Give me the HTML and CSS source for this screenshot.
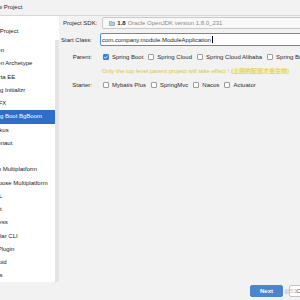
FILE: index.html
```html
<!DOCTYPE html>
<html lang="en">
<head>
    <meta charset="UTF-8">
    <title>New Project</title>
    <link rel="stylesheet" href="styles.css">
</head>
<body>
    <div class="window">
        <!-- Title bar -->
        <div class="titlebar"><span class="title">New Project</span></div>

        <div class="main">
            <!-- Generators list -->
            <div class="sidebar">
                <ul class="generators">
                    <li class="first">New Project</li>
                    <li>Maven</li>
                    <li>Maven Archetype</li>
                    <li>Jakarta EE</li>
                    <li>Spring Initializr</li>
                    <li>JavaFX</li>
                    <li class="selected">Spring Boot BgBoom</li>
                    <li>Quarkus</li>
                    <li>Micronaut</li>
                    <li>Ktor</li>
                    <li>Kotlin Multiplatform</li>
                    <li>Compose Multiplatform</li>
                    <li>HTML</li>
                    <li>React</li>
                    <li>Express</li>
                    <li>Angular CLI</li>
                    <li>IDE Plugin</li>
                    <li>Android</li>
                    <li>Vue.js</li>
                </ul>
                <div class="scroll-thumb"></div>
            </div>

            <!-- Settings -->
            <div class="content">
                <div class="sdk-row">
                    <span class="sdk-label">Project SDK:</span>
                    <div class="sdk-select">
                        <svg class="sdk-icon" width="6" height="6" viewBox="0 0 6 6">
                            <path d="M0.5 1.5h2l0.6 0.7h2.4v3.3h-5z" fill="#b9c9dc" stroke="#6f8fb5" stroke-width="0.6"/>
                        </svg>
                        <b>1.8</b>
                        <span class="muted">Oracle OpenJDK version 1.8.0_231</span>
                    </div>
                </div>

                <div class="form-row start">
                    <span class="label">Start Class:</span>
                    <div class="text-field">com.company.module.ModuleApplication<span class="caret"></span></div>
                </div>

                <div class="form-row parent">
                    <span class="label">Parent:</span>
                    <div class="checks">
                        <span class="check"><span class="box on">
                            <svg width="6" height="6" viewBox="0 0 6 6"><path d="M1.2 3.1l1.2 1.2 2.4-2.7" fill="none" stroke="#fff" stroke-width="0.9"/></svg>
                        </span>Spring Boot</span>
                        <span class="check"><span class="box"></span>Spring Cloud</span>
                        <span class="check"><span class="box"></span>Spring Cloud Alibaba</span>
                        <span class="check"><span class="box"></span>Spring Boot Admin</span>
                    </div>
                </div>

                <div class="form-row">
                    <span class="label"></span>
                    <div class="hint">Only the top level parent project will take effect ! <span class="zh">(上层的配置才会生效)</span></div>
                </div>

                <div class="form-row">
                    <span class="label">Starter:</span>
                    <div class="checks">
                        <span class="check"><span class="box"></span>Mybatis Plus</span>
                        <span class="check"><span class="box"></span>SpringMvc</span>
                        <span class="check"><span class="box"></span>Nacos</span>
                        <span class="check"><span class="box"></span>Actuator</span>
                    </div>
                </div>
            </div>
        </div>

        <!-- Buttons -->
        <div class="footer">
            <button class="btn primary">Next</button>
            <button class="btn cancel">Cancel</button>
            <span class="watermark">@51CTO博客</span>
        </div>
    </div>
</body>
</html>
```

FILE: styles.css
```css
body {
    margin: 0;
    font-family: "Liberation Sans", "Noto Sans CJK SC", sans-serif;
    font-size: 6px;
    line-height: 12px;
    color: #2b2b2b;
    background: #f2f2f2;
}

.window {
    width: 300px;
    height: 300px;
    overflow: hidden;
    display: flex;
    flex-direction: column;
}

.titlebar {
    flex: none;
    height: 15px;
    line-height: 15px;
    border-bottom: 1px solid #d6d6d6;
    overflow: hidden;
}

.title {
    display: block;
    margin-left: -10px;
    white-space: nowrap;
}

.main {
    flex: 1;
    display: flex;
    min-height: 0;
}

/* Generators list */
.sidebar {
    flex: none;
    width: 59px;
    background: #fff;
    position: relative;
    overflow: hidden;
}

.generators {
    list-style: none;
    margin: 0 0 0 -14px;
    padding: 9px 0 0;
}

.generators li {
    height: 13.25px;
    line-height: 13.25px;
    white-space: nowrap;
    color: #222;
}

.generators .first {
    margin-bottom: 5.75px;
}

.generators .selected {
    background: #2e6dc8;
    color: #fff;
}

.scroll-thumb {
    position: absolute;
    right: 0;
    top: 24px;
    bottom: 0;
    width: 4px;
    background: #e4e4e4;
}

/* Settings */
.content {
    flex: 1;
    min-width: 0;
    overflow: hidden;
}

.sdk-row {
    display: flex;
    align-items: center;
    gap: 5px;
    height: 12px;
    margin-top: 1px;
    padding-left: 4px;
}

.sdk-label {
    white-space: nowrap;
}

.sdk-select {
    flex: 1;
    height: 12px;
    box-sizing: border-box;
    border: 1px solid #c9c9c9;
    border-radius: 2px;
    background: #f8f8f8;
    margin-right: -4px;
    padding-left: 6px;
    display: flex;
    align-items: center;
    gap: 2px;
    white-space: nowrap;
}

.sdk-icon {
    flex: none;
}

.muted {
    color: #8a8a8a;
}

.form-row {
    display: flex;
    align-items: center;
    gap: 8px;
    height: 12px;
    margin-top: 2px;
}

.form-row.start {
    height: 13px;
    margin-top: 4px;
}

.form-row.parent {
    margin-top: 5px;
}

.label {
    flex: none;
    width: 33px;
    text-align: right;
    white-space: nowrap;
}

.text-field {
    flex: 1;
    height: 13px;
    box-sizing: border-box;
    border: 1.5px solid #4a8fdb;
    border-radius: 2px;
    background: #fff;
    margin-right: -4px;
    padding-left: 1px;
    display: flex;
    align-items: center;
    white-space: nowrap;
    color: #1e1e1e;
}

.caret {
    width: 1px;
    height: 7px;
    background: #000;
    margin-left: 1px;
}

.checks {
    display: flex;
    gap: 5px;
    padding-left: 3px;
    white-space: nowrap;
}

.check {
    display: flex;
    align-items: center;
    gap: 3px;
}

.box {
    width: 6px;
    height: 6px;
    box-sizing: border-box;
    border: 1px solid #9d9d9d;
    border-radius: 1px;
    background: #fff;
    display: flex;
    align-items: center;
    justify-content: center;
}

.box.on {
    background: #3b7fd9;
    border-color: #3b7fd9;
}

.box svg {
    flex: none;
}

.hint {
    padding-left: 2px;
    color: #d6c649;
    white-space: nowrap;
}

.hint .zh {
    background: #f6f1b6;
}

/* Buttons */
.footer {
    flex: none;
    height: 18px;
    display: flex;
    align-items: center;
    justify-content: flex-end;
    gap: 6px;
    position: relative;
}

.btn {
    width: 33px;
    height: 12px;
    padding: 0;
    font: inherit;
    line-height: 10px;
    border: 1px solid #c4c4c4;
    border-radius: 2px;
    background: #fff;
    color: #333;
}

.btn.primary {
    background: #4a86cf;
    border-color: #4a86cf;
    color: #fff;
    font-weight: bold;
}

.btn.cancel {
    margin-right: -22px;
}

.watermark {
    position: absolute;
    left: 284px;
    top: 3px;
    color: #b8b8b8;
    white-space: nowrap;
}
```
